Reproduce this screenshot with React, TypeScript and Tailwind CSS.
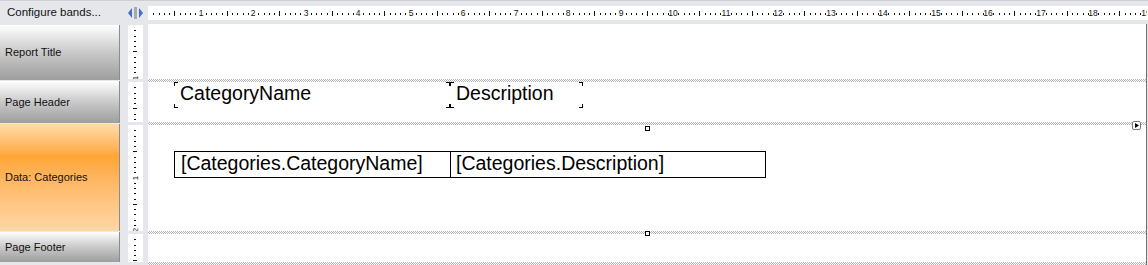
import React from "react";

const UNIT = 52.5;
const FONT = { fontFamily: '"Liberation Sans", Arial, sans-serif' };

function HRuler() {
  const marks: React.ReactNode[] = [];
  for (let i = 1; i <= 190; i++) {
    const x = Math.round((i * UNIT) / 10);
    if (i % 10 === 0) {
      marks.push(
        <text key={i} x={x} y={10} fontSize={8.5} textAnchor="middle" fill="#111" style={FONT}>
          {i / 10}
        </text>
      );
    } else if (i % 5 === 0) {
      marks.push(<rect key={i} x={x} y={5} width={1} height={5} fill="#111" />);
    } else {
      marks.push(<rect key={i} x={x} y={7} width={1} height={2} fill="#111" />);
    }
  }
  return (
    <svg width={999} height={14} className="block">
      {marks}
    </svg>
  );
}

function VRuler({ h }: { h: number }) {
  const marks: React.ReactNode[] = [];
  const n = Math.floor((h * 10) / UNIT);
  for (let i = 1; i <= n; i++) {
    const y = Math.round((i * UNIT) / 10);
    if (i % 10 === 0) {
      marks.push(
        <text
          key={i}
          x={0}
          y={0}
          fontSize={8}
          textAnchor="middle"
          fill="#111"
          style={FONT}
          transform={`translate(10 ${y}) rotate(-90)`}
        >
          {i / 10}
        </text>
      );
    } else if (i % 5 === 0) {
      marks.push(<rect key={i} x={5} y={y} width={4} height={1} fill="#111" />);
    } else {
      marks.push(<rect key={i} x={6} y={y} width={2} height={1} fill="#111" />);
    }
  }
  return (
    <svg width={15} height={h} className="block bg-white">
      {marks}
    </svg>
  );
}

function Hatch() {
  return (
    <div className="h-[3px] bg-[image:repeating-conic-gradient(#b4b4b4_0_25%,#ffffff_0_50%)] bg-[length:2px_2px]" />
  );
}

function Corners() {
  return (
    <>
      <span className="absolute left-0 top-0 h-[4px] w-[4px] border-l border-t border-black" />
      <span className="absolute right-0 top-0 h-[4px] w-[4px] border-r border-t border-black" />
      <span className="absolute bottom-0 left-0 h-[4px] w-[4px] border-b border-l border-black" />
      <span className="absolute bottom-0 right-0 h-[4px] w-[4px] border-b border-r border-black" />
    </>
  );
}

function Label({ text, w }: { text: string; w: number }) {
  return (
    <div className="relative h-[26px] pl-[6px] text-[19.5px] leading-[22px] text-black" style={{ width: w }}>
      <Corners />
      {text}
    </div>
  );
}

function BandButton({ name, h, active }: { name: string; h: number; active?: boolean }) {
  return (
    <div
      className={
        active
          ? "flex items-center border-r border-[#8c8c8c] bg-linear-to-b from-[#ffdca8] via-[#ffa634] via-30% to-[#ffd7a6] pl-[5px] text-[11px] text-[#111]"
          : "flex items-center border-r border-[#8c8c8c] bg-linear-to-b from-[#ffffff] via-[#c9c9c9] to-[#9e9e9e] pl-[5px] text-[11px] text-[#111]"
      }
      style={{ height: h }}
    >
      {name}
    </div>
  );
}

export default function App() {
  return (
    <div className="flex h-[265px] w-[1148px] flex-col overflow-hidden bg-[#e6e7eb]" style={FONT}>
      <div className="flex h-[24px] items-center border-t border-[#cfd0d4]">
        <div className="w-[128px] pl-[7px] text-[11.5px] text-[#111]">Configure bands...</div>
        <svg width={16} height={12} className="block">
          <polygon points="4,1 0,6 4,11" fill="#3f6fd1" />
          <rect x={6} y={0} width={3} height={12} fill="#a9a9a9" />
          <polygon points="11,1 15,6 11,11" fill="#3f6fd1" />
        </svg>
        <div className="ml-[4px] flex h-[14px] flex-1 items-start bg-white">
          <HRuler />
        </div>
      </div>

      <div className="flex flex-1">
        <div className="flex w-[120px] flex-col gap-[1px] pt-[1px]">
          <BandButton name="Report Title" h={55} />
          <BandButton name="Page Header" h={42} />
          <BandButton name="Data: Categories" h={107} active />
          <BandButton name="Page Footer" h={30} />
        </div>

        <div className="ml-[8px] flex w-[15px] flex-col gap-[3px] pt-[1px]">
          <VRuler h={54} />
          <VRuler h={40} />
          <VRuler h={106} />
          <VRuler h={28} />
        </div>

        <div className="relative ml-[5px] flex w-[999px] flex-col border-r border-[#707070]">
          <div className="h-[55px] bg-white" />
          <Hatch />
          <div className="flex h-[40px] bg-white pl-[26px]">
            <Label text="CategoryName" w={276} />
            <Label text="Description" w={133} />
          </div>
          <Hatch />
          <div className="h-[106px] bg-white pl-[26px] pt-[26px]">
            <div className="flex h-[27px] w-[592px] border border-black text-[19.5px] leading-[22px] text-black">
              <div className="w-[276px] border-r border-black pl-[6px]">[Categories.CategoryName]</div>
              <div className="pl-[5px]">[Categories.Description]</div>
            </div>
          </div>
          <Hatch />
          <div className="h-[28px] bg-white" />
          <Hatch />

          <span className="absolute left-[497px] top-[102px] h-[5px] w-[5px] border border-black bg-white" />
          <span className="absolute left-[497px] top-[207px] h-[5px] w-[5px] border border-black bg-white" />
          <span className="absolute left-[984px] top-[97px] flex h-[9px] w-[9px] items-center justify-center rounded-[2px] border border-[#7a7a7a] bg-white">
            <svg width={4} height={5} className="block">
              <polygon points="0,0 4,2.5 0,5" fill="#000" />
            </svg>
          </span>
        </div>
      </div>
    </div>
  );
}
